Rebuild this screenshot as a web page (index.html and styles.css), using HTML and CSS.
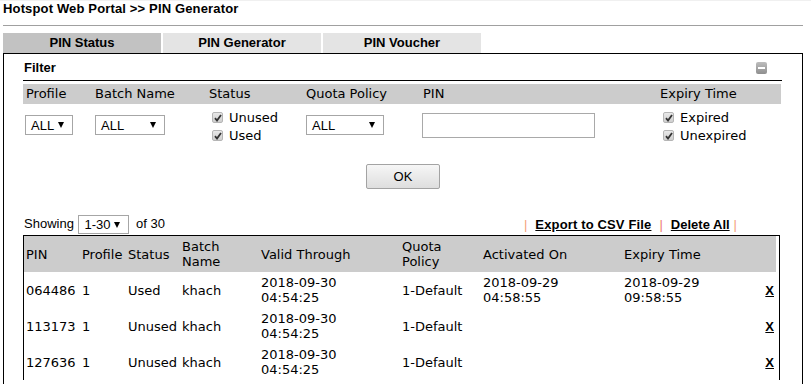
FILE: index.html
```html
<!DOCTYPE html>
<html lang="en">
<head>
    <meta charset="UTF-8">
    <meta name="viewport" content="width=device-width, initial-scale=1.0">
    <title>PIN Generator</title>
    <link rel="stylesheet" href="styles.css">
</head>
<body>
    <div class="title">Hotspot Web Portal &gt;&gt; PIN Generator</div>
    <div class="rule"></div>
    <div class="tabs">
        <div class="tab on">PIN Status</div>
        <div class="tab">PIN Generator</div>
        <div class="tab">PIN Voucher</div>
    </div>
    <div class="panel">
        <div class="filter_head">
            <span>Filter</span>
            <span class="minus"></span>
        </div>
        <div class="filter">
            <div class="lbl">Profile</div>
            <div class="lbl">Batch Name</div>
            <div class="lbl">Status</div>
            <div class="lbl">Quota Policy</div>
            <div class="lbl">PIN</div>
            <div class="lbl">Expiry Time</div>

            <div class="cell"><span class="sel w48">ALL<i class="arr"></i></span></div>
            <div class="cell"><span class="sel w70">ALL<i class="arr"></i></span></div>
            <div class="cell checks">
                <div class="chk"><span class="box"><svg width="8" height="8" viewBox="0 0 8 8"><path d="M1 4.2 L3 6.5 L7 1" fill="none" stroke="#333" stroke-width="1.8"/></svg></span>Unused</div>
                <div class="chk"><span class="box"><svg width="8" height="8" viewBox="0 0 8 8"><path d="M1 4.2 L3 6.5 L7 1" fill="none" stroke="#333" stroke-width="1.8"/></svg></span>Used</div>
            </div>
            <div class="cell"><span class="sel w78">ALL<i class="arr"></i></span></div>
            <div class="cell"><span class="pin_input"></span></div>
            <div class="cell checks">
                <div class="chk"><span class="box"><svg width="8" height="8" viewBox="0 0 8 8"><path d="M1 4.2 L3 6.5 L7 1" fill="none" stroke="#333" stroke-width="1.8"/></svg></span>Expired</div>
                <div class="chk"><span class="box"><svg width="8" height="8" viewBox="0 0 8 8"><path d="M1 4.2 L3 6.5 L7 1" fill="none" stroke="#333" stroke-width="1.8"/></svg></span>Unexpired</div>
            </div>
        </div>
        <div class="ok_row"><button class="ok_btn">OK</button></div>
        <div class="show_row">
            <div class="showing">Showing <span class="sel w50">1-30<i class="arr"></i></span> of 30</div>
            <div class="actions">
                <span class="pipe">|</span><a href="#" class="csv">Export to CSV File</a><span class="pipe red">|</span><a href="#" class="del_all">Delete All</a><span class="pipe">|</span>
            </div>
        </div>
        <div class="list">
            <table>
                <colgroup>
                    <col style="width:56px"><col style="width:46px"><col style="width:54px"><col style="width:79px">
                    <col style="width:141px"><col style="width:81px"><col style="width:141px"><col style="width:137px"><col style="width:17px">
                </colgroup>
                <thead>
                    <tr>
                        <th>PIN</th>
                        <th>Profile</th>
                        <th>Status</th>
                        <th>Batch<br>Name</th>
                        <th>Valid Through</th>
                        <th>Quota<br>Policy</th>
                        <th>Activated On</th>
                        <th>Expiry Time</th>
                        <th></th>
                    </tr>
                </thead>
                <tbody>
                </tbody>
            </table>
        </div>
    </div>
    <script>
        let pins=[
            {pin:'064486',profile:'1',status:'Used',batch:'khach',valid:'2018-09-30<br>04:54:25',quota:'1-Default',act:'2018-09-29<br>04:58:55',exp:'2018-09-29<br>09:58:55'},
            {pin:'113173',profile:'1',status:'Unused',batch:'khach',valid:'2018-09-30<br>04:54:25',quota:'1-Default',act:'',exp:''},
            {pin:'127636',profile:'1',status:'Unused',batch:'khach',valid:'2018-09-30<br>04:54:25',quota:'1-Default',act:'',exp:''}
        ]
        let tbody=document.querySelector('tbody')
        for(let i=0;i<pins.length;i++){
            let tr=document.createElement('tr')
            tr.innerHTML=`
                <td>${pins[i].pin}</td>
                <td>${pins[i].profile}</td>
                <td>${pins[i].status}</td>
                <td>${pins[i].batch}</td>
                <td>${pins[i].valid}</td>
                <td>${pins[i].quota}</td>
                <td>${pins[i].act}</td>
                <td>${pins[i].exp}</td>
                <td class="del"><a href="#">X</a></td>
            `
            tbody.appendChild(tr)
        }
    </script>
</body>
</html>
```

FILE: styles.css
```css
*{
    margin: 0;
    padding: 0;
    box-sizing: border-box;
}
body{
    font-family: "Liberation Sans", Arial, sans-serif;
    font-size: 13px;
    color: #000;
    background: #fff;
    overflow: hidden;
}
.title{
    border-top: 1px solid #f0f0f0;
    padding-left: 3px;
    font-weight: bold;
    line-height: 16px;
    letter-spacing: 0.15px;
}
.rule{
    margin: 8px 0 0 3px;
    width: 800px;
    border-top: 1px solid #a0a0a0;
}
.tabs{
    display: flex;
    gap: 2px;
    margin: 7px 0 0 3px;
}
.tab{
    width: 158px;
    height: 20px;
    line-height: 20px;
    text-align: center;
    font-weight: bold;
    background-color: #e4e4e4;
}
.tab.on{
    background-color: #c2c2c2;
}
.panel{
    margin-left: 3px;
    width: 800px;
    height: 340px;
    border: 1px solid #000;
    border-bottom: none;
    padding-left: 19px;
}
.filter_head{
    width: 759px;
    display: flex;
    justify-content: space-between;
    align-items: center;
    padding: 6px 15px 4px 1px;
    line-height: 16px;
    font-weight: bold;
    border-bottom: 1px solid #000;
}
.minus{
    width: 11px;
    height: 12px;
    border-radius: 2px;
    background: linear-gradient(#bdbdbd, #8f8f8f);
    position: relative;
}
.minus::after{
    content: '';
    position: absolute;
    left: 2px;
    right: 2px;
    top: 5px;
    height: 2px;
    background: #fff;
}
.filter{
    width: 758px;
    margin-top: 3px;
    display: grid;
    grid-template-columns: 69px 114px 97px 117px 237px 124px;
    grid-template-rows: 20px 42px;
    font-family: "DejaVu Sans", Verdana, sans-serif;
}
.lbl{
    background-color: #cccccc;
    line-height: 20px;
    padding-left: 3px;
}
.cell{
    display: flex;
    flex-direction: column;
    justify-content: center;
    padding-left: 2px;
}
.checks{
    padding-top: 4px;
}
.sel{
    display: inline-flex;
    align-items: center;
    justify-content: space-between;
    height: 20px;
    padding: 0 8px 0 5px;
    border: 1px solid #a6a6a6;
    font-family: "Liberation Sans", Arial, sans-serif;
    background: #fff;
    vertical-align: middle;
}
.w48{ width: 48px; }
.w70{ width: 70px; margin-left: 1px; }
.w78{ width: 78px; margin-left: 1px; }
.w50{ width: 51px; padding-left: 5px; }
.arr{
    width: 0;
    height: 0;
    border-left: 3px solid transparent;
    border-right: 3px solid transparent;
    border-top: 6px solid #000;
}
.chk{
    display: flex;
    align-items: center;
    height: 19px;
    padding-left: 4px;
    margin-top: -1px;
}
.box{
    width: 11px;
    height: 11px;
    margin-right: 6px;
    border: 1px solid #b5b5b5;
    border-radius: 2px;
    background: linear-gradient(#e8e8e8, #cfcfcf);
    display: flex;
    align-items: center;
    justify-content: center;
}
.pin_input{
    width: 173px;
    height: 25px;
    border: 1px solid #a9a9a9;
    margin-top: 1px;
}
.ok_row{
    width: 760px;
    margin-top: 18px;
    text-align: center;
}
.ok_btn{
    width: 74px;
    height: 25px;
    font-family: "Liberation Sans", Arial, sans-serif;
    font-size: 13px;
    border: 1px solid #a3a3a3;
    border-radius: 2px;
    background: linear-gradient(#f6f6f6, #dedede);
}
.show_row{
    width: 757px;
    margin-top: 25px;
    display: flex;
    justify-content: space-between;
    align-items: center;
    height: 21px;
    padding-left: 1px;
}
.showing .sel{
    height: 19px;
    margin: 0 3px 0 1px;
}
.actions{
    font-weight: bold;
    padding-right: 43px;
}
.actions a{
    color: #000;
}
.csv{
    margin: 0 8px 0 8px;
    letter-spacing: 0.15px;
}
.del_all{
    margin: 0 4px 0 8px;
}
.pipe{
    color: #f4a07a;
    font-weight: normal;
}
.pipe.red{
    color: #ee7b6f;
}
.list{
    width: 757px;
    border: 1px solid #000;
    border-bottom: none;
    padding-right: 3px;
}
table{
    width: 752px;
    table-layout: fixed;
    border-collapse: collapse;
    font-family: "DejaVu Sans", Verdana, sans-serif;
    font-size: 13px;
    line-height: 15px;
}
th{
    background-color: #cccccc;
    font-weight: normal;
    text-align: left;
}
th,td{
    height: 36px;
    padding-left: 2px;
    vertical-align: middle;
    white-space: nowrap;
}
.del{
    text-align: right;
    padding-right: 2px;
}
.del a{
    color: #000;
    font-weight: bold;
    font-family: "Liberation Sans", Arial, sans-serif;
}
```
